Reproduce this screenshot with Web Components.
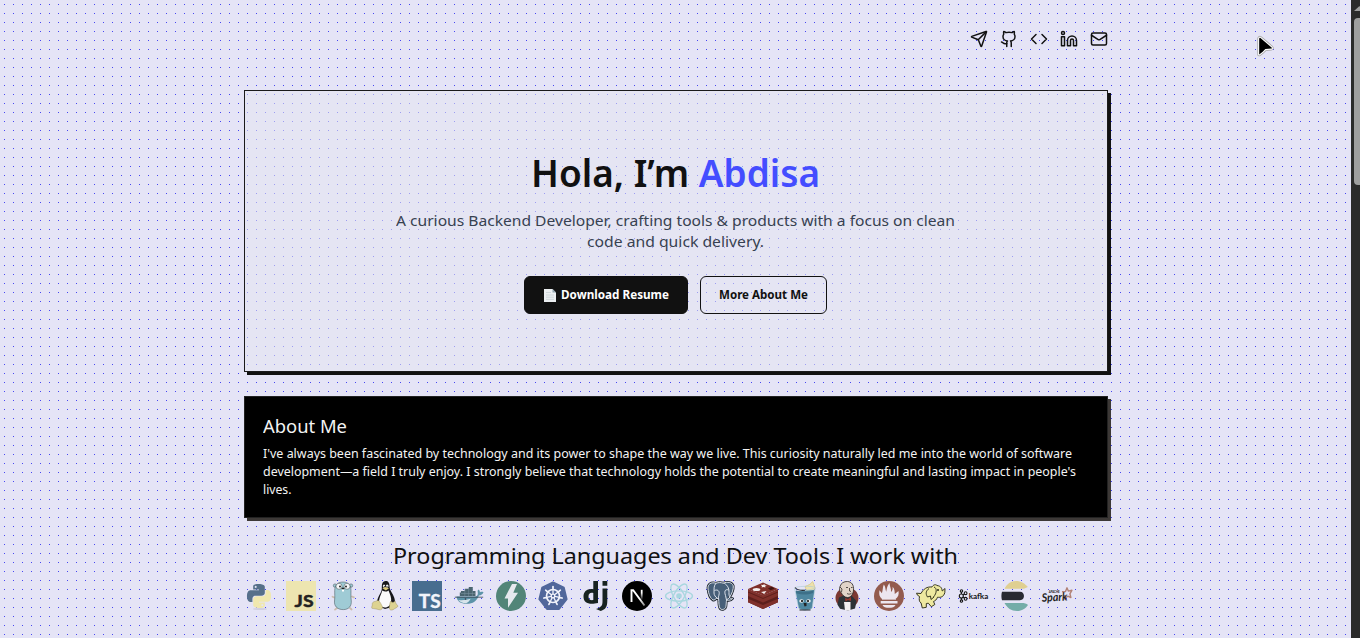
<!DOCTYPE html>
<html lang="en"><head><meta charset="utf-8"><title>Abdisa</title>
<style>
html,body{margin:0;height:100%;overflow:hidden}
body{font-family:"Noto Sans","Open Sans",sans-serif;color:#111}
</style></head><body>
<portfolio-page></portfolio-page>
<script>
const define=(name,html,ready)=>{
  const t=document.createElement('template');t.innerHTML=html;
  customElements.define(name,class extends HTMLElement{
    constructor(){super();this.attachShadow({mode:'open'}).append(t.content.cloneNode(true));}
    connectedCallback(){if(ready)ready(this,this.shadowRoot);}
  });
};

/* One line of copy, set to an exact measure */
define('text-line','<style>:host{display:block;white-space:pre}span{display:inline-block;transform-origin:0 50%}</style><span><slot></slot></span>',(el,r)=>{
  const w=+el.getAttribute('measure'),s=r.querySelector('span');
  el.style.width=w+'px';
  const fit=()=>{s.style.transform='none';const n=s.getBoundingClientRect().width;if(n)s.style.transform=`scaleX(${w/n})`;};
  requestAnimationFrame(fit);
});

const LINKS={
 send:'<path d="M14.536 21.686a.5.5 0 0 0 .937-.024l6.5-19a.496.496 0 0 0-.635-.635l-19 6.5a.5.5 0 0 0-.024.937l7.93 3.18a2 2 0 0 1 1.112 1.11z"/><path d="m21.854 2.147-10.94 10.939"/>',
 github:'<path d="M15 22v-4a4.8 4.8 0 0 0-1-3.5c3 0 6-2 6-5.5.08-1.25-.27-2.48-1-3.5.28-1.15.28-2.35 0-3.5 0 0-1 0-3 1.5-2.64-.5-5.36-.5-8 0C6 2 5 2 5 2c-.3 1.15-.3 2.35 0 3.5A5.403 5.403 0 0 0 4 9c0 3.5 3 5.5 6 5.5-.39.49-.68 1.05-.85 1.65-.17.6-.22 1.23-.15 1.85v4"/><path d="M9 18c-4.51 2-5-2-7-2"/>',
 code:'<path d="m16 18 6-6-6-6M8 6l-6 6 6 6"/>',
 linkedin:'<path d="M16 8a6 6 0 0 1 6 6v7h-4v-7a2 2 0 0 0-4 0v7h-4v-7a6 6 0 0 1 6-6z"/><rect x="2" y="9" width="4" height="12"/><circle cx="4" cy="4" r="2"/>',
 mail:'<rect x="2" y="4" width="20" height="16" rx="2"/><path d="m22 7-8.97 5.7a1.94 1.94 0 0 1-2.06 0L2 7"/>'
};
define('social-link','<style>:host{display:block;width:18px;height:18px}svg{display:block}</style><svg width="18" height="18" viewBox="0 0 24 24" fill="none" stroke="#111" stroke-width="2" stroke-linecap="round" stroke-linejoin="round"></svg>',(el,r)=>{r.querySelector('svg').innerHTML=LINKS[el.getAttribute('icon')];});

const py='M14.25.18l.9.2.73.26.59.3.45.32.34.34.25.34.16.33.1.3.04.26.02.2-.01.13V8.5l-.05.63-.13.55-.21.46-.26.38-.3.31-.33.25-.35.19-.35.14-.33.1-.3.07-.26.04-.21.02H8.77l-.69.05-.59.14-.5.22-.41.27-.33.32-.27.35-.2.36-.15.37-.1.35-.07.32-.04.27-.02.21v3.06H3.17l-.21-.03-.28-.07-.32-.12-.35-.18-.36-.26-.36-.36-.35-.46-.32-.59-.28-.73-.21-.88-.14-1.05-.05-1.23.06-1.22.16-1.04.24-.87.32-.71.36-.57.4-.44.42-.33.42-.24.4-.16.36-.1.32-.05.24-.01h.16l.06.01h8.16v-.83H6.18l-.01-2.75-.02-.37.05-.34.11-.31.17-.28.25-.26.31-.23.38-.2.44-.18.51-.15.58-.12.64-.1.71-.06.77-.04.84-.02 1.27.05zm-6.3 1.98l-.23.33-.08.41.08.41.23.34.33.22.41.09.41-.09.33-.22.23-.34.08-.41-.08-.41-.23-.33-.33-.22-.41-.09-.41.09z';
const spokes=[...Array(7)].map((_,i)=>`<path d="M15 13V6.4" transform="rotate(${i*360/7} 15 15)"/>`).join('');
const TOOLS={
 python:`<ellipse cx="16" cy="28" rx="7" ry="1" fill="#bbb9cc" opacity=".5"/><g transform="translate(3 3)"><path fill="#56708a" d="${py}"/><path fill="#f0e8ae" transform="rotate(180 12 12)" d="${py}"/></g>`,
 javascript:'<rect width="30" height="30" fill="#ede5b0"/><text x="8.6" y="26.4" font-size="17.6" font-weight="700" textLength="19" lengthAdjust="spacingAndGlyphs" fill="#222" stroke="#222" stroke-width=".5">JS</text>',
 go:'<g stroke="#3b4a50" stroke-width=".5"><circle cx="7" cy="4.6" r="1.7" fill="#9fcbd5"/><circle cx="23" cy="4.6" r="1.7" fill="#9fcbd5"/><path d="M6.2 16.5l-1.7-.8M24 15.5l1.9.9M9 27l-2 1.6M22 27l1.6 1.5" stroke="#cdbdae" stroke-width="1.8" stroke-linecap="round"/><path d="M15 1c5.5 0 8 3.500 8 8.500 0 4-.2 6 .3 10.500.4 5-2.500 8.600-8 8.600-6 0-9.300-3.500-8.800-8.600.6-5 .1-7 .2-10.500C6.900 4 9.500 1 15 1Z" fill="#9fcbd5"/><circle cx="11" cy="5.300" r="3" fill="#f5f6f8"/><circle cx="19" cy="5.300" r="3" fill="#f5f6f8"/></g><circle cx="12" cy="5.500" r=".9" fill="#111"/><circle cx="18" cy="5.500" r=".9" fill="#111"/><ellipse cx="15" cy="7.500" rx="1.500" ry=".9" fill="#222"/><path d="M14 8.500h2v2h-2z" fill="#fff"/>',
 linux:'<path fill="#17171a" d="M15.500 0c3 0 4 2.100 4 5 0 3 1 4.500 3.200 8.200 2.500 4.500 3 8 1 12.300L15 28l-9-4c1-5 2.500-9 4.500-12 1.500-2.300 1.300-4 1.300-6.500 0-3.400 1.200-5.500 3.700-5.500Z"/><path fill="#fafafa" d="M12.300 9.500c2 1.500 4.200 1.500 6.200-.1 1.500 3.600 3.200 7 2.600 11.600-.5 3-3 5.500-6.100 5.500-3.500 0-6-3-6-6.200.3-4 2.300-7 3.300-10.800Z"/><ellipse cx="14" cy="5.100" rx="1.200" ry="1.500" fill="#eee"/><ellipse cx="17.200" cy="5.100" rx="1.300" ry="1.500" fill="#eee"/><circle cx="14.300" cy="5.400" r=".5"/><circle cx="17" cy="5.400" r=".5"/><path fill="#dcc978" d="m12.400 7.300 3-1.400 3.600 1.300-3.200 2.200Z"/><path fill="#ddd391" stroke="#8f8350" stroke-width=".4" d="M4.500 20.500c1.500.2 2.300-1.500 3.700-1 2 1 3 4 4.200 6.100.8 2-1 3.700-3.500 3.100-2.200-1-6-.9-7-1.500-.9-1.200.8-2.500.4-4-.2-1.400.8-2.300 2.200-2.700ZM20.800 20c1 2 3 1.500 4.300 0 .7 2.600 1.600 3.700 3 5-.5 1.600-3.300 2.200-5 3.700-2 1-4 .1-3.800-2 .4-2.200.3-4.600 1.500-6.700Z"/>',
 typescript:'<rect width="30" height="30" fill="#486d8f"/><text x="6.800" y="27" font-size="18.400" font-weight="700" textLength="21.800" lengthAdjust="spacingAndGlyphs" fill="#f2f4fa" stroke="#f2f4fa" stroke-width=".4">TS</text>',
 docker:'<path fill="#4a646f" d="M7 10h3.800V7.800h4V6h4v4h2.700v5H5.800v-3.500H7Z"/><path stroke="#7d97a4" stroke-width=".5" d="M7 12.500h14M10.800 8v7M14.600 7v8M18.400 7v8" fill="none"/><path fill="#5c93a8" d="M2.500 15.500h19c1.800-.3 2.500-1.600 2.300-3.500-.2-1.300-.3-2.500.4-3.500 1.200.6 1.700 1.500 1.700 2.700 1.200-.6 2.600-.6 3.600 0-.6 2.100-2.400 3-4.600 3.200-2 5.300-6 8.400-12 8.400-6.500 0-10-2.600-10.400-7.300Z"/><path fill="#d7e4eb" d="M4.300 19c4 .5 9 0 12.300-1.200-1.500 2.600-2.600 3.700-4.500 4.400-3.800-.1-6.300-1.100-7.800-3.200Z"/><path d="M.8 16.200h28.400" stroke="#34424c" stroke-width=".8"/><circle cx="11.500" cy="18" r=".8" fill="#334"/>',
 fastapi:'<circle cx="15" cy="15" r="15" fill="#528578"/><path fill="#e6e9ee" d="M16 3h5l-3.700 8.800H22L12 26.700v-9.300H8.500Z"/>',
 kubernetes:`<path fill="#51679b" stroke="#51679b" stroke-width="2" stroke-linejoin="round" d="m15 1.500 10.800 5.200 2.800 11.500L21 28H9L1.400 18.200 4.200 6.700Z"/><g fill="none" stroke="#f3f4fc" stroke-width="1.300"><circle cx="15" cy="15" r="6.500" stroke-width="1.700"/><circle cx="15" cy="15" r="1.800"/>${spokes}</g><g stroke="#f3f4fc" stroke-width="1.600" stroke-linecap="round">${[...Array(7)].map((_,i)=>`<path d="M15 7V5.600" transform="rotate(${i*360/7} 15 15)"/>`).join('')}</g>`,
 django:'<path transform="translate(3 0)" fill="#182321" d="M10.300 0h4.700v22c-2.400.5-4.300.7-6 .7-5.600 0-8.500-2.400-8.500-7.300 0-4.500 2.900-7.500 7.700-7.500.8 0 1.400.1 2.100.3Zm0 12.100c-2.800-.9-4.800.5-4.800 3.300 0 2.900 1.700 4.200 4.800 3.700ZM19.500 0h4.800v4.700h-4.800ZM19.500 7.500h4.800v12.500c0 6-1.700 8.300-6.500 10L13 28c4.800-1.800 6.500-3 6.500-7.600Z"/>',
 next:'<defs><linearGradient id="n" x2="0" y2="1"><stop offset=".3" stop-color="#fff"/><stop offset="1" stop-color="#fff" stop-opacity="0"/></linearGradient><linearGradient id="m" x1="0" y1="0" x2="1" y2="1"><stop offset=".6" stop-color="#fff"/><stop offset="1" stop-color="#888"/></linearGradient></defs><circle cx="15" cy="15" r="15"/><path d="M9.500 21V9.300h1.700L22.500 24.500" fill="none" stroke="url(#m)" stroke-width="1.900"/><path d="M18.800 8.800h1.800V19h-1.800Z" fill="url(#n)"/>',
 react:'<g fill="none" stroke="#a9d7df" stroke-width="1.350"><ellipse cx="15" cy="15" rx="13.500" ry="5.200"/><ellipse cx="15" cy="15" rx="13.500" ry="5.200" transform="rotate(60 15 15)"/><ellipse cx="15" cy="15" rx="13.500" ry="5.200" transform="rotate(120 15 15)"/></g><circle cx="15" cy="15" r="2.800" fill="#a9d7df"/>',
 postgres:'<path fill="#475f78" stroke="#171f28" stroke-width="2.600" stroke-linejoin="round" d="M10 2.200C5 .8 1.400 3 2 8c.5 5 2.400 9.500 5 11 1.600.6 2.500-1.300 3.600-1.600l2 .4c.4 3.500-.1 8 1.700 10 1.800 1.500 5.100.5 5.600-2 .4-2.200.3-5.500.7-6.700 2.500.5 4.900 0 6-1.500-1.500.1-2.500-.2-3-1.200 2.500-4 4-8.200 3.700-11.500-1.300-4-6-4.200-10-2.800-2.400-.7-4.800-.7-7.300.1Z"/><path fill="#475f78" stroke="#edf0f8" stroke-width=".9" d="M10 2.200C5 .8 1.400 3 2 8c.5 5 2.400 9.500 5 11 1.600.6 2.500-1.300 3.600-1.600l2 .4c.4 3.500-.1 8 1.700 10 1.800 1.500 5.100.5 5.600-2 .4-2.200.3-5.500.7-6.700 2.500.5 4.900 0 6-1.500-1.500.1-2.500-.2-3-1.200 2.500-4 4-8.200 3.700-11.500-1.300-4-6-4.200-10-2.800-2.400-.7-4.800-.7-7.300.1ZM10 2.200C7.500 5 8.200 8 8 12c0 2 1.500 4 3 5M8.500 9.500c3-1.300 5 .3 4.700 3.200-.3 2.300-1.500 4.200-.7 5.300M17.300 2c3.500 1 6 5 5.700 9.500-.2 2.200.5 3.500.5 5l-3 2.500M22.800 9c-3-1-5 .3-3.300 5.500l1 4.500"/>',
 redis:'<path fill="#5d1f1c" d="m0 8.500 15 6 15-6v12.700L15 28 0 21.200Z"/><path fill="#7f302b" d="m0 8 15-6.500L30 8 15 14.500ZM0 11.200l15 6.300 15-6.300v3.700l-15 6.500-15-6.500ZM0 17.700l15 6.300 15-6.300v3.600L15 28 0 21.300Z"/><path fill="#7f302b" d="M0 8l15 6.500L30 8v2.800l-15 6.500L0 10.800Z"/><path fill="none" stroke="#5d1f1c" stroke-width=".8" d="m0 11 15 6.500L30 11"/><ellipse cx="8.500" cy="8.500" rx="3.800" ry="1.600" fill="#f3eeee"/><path fill="#f3eeee" d="m13 3.700 2 .3 1.300-.9.500 1.200 2 .2-1.700 1 .4 1-2-.5-2 .6.500-1.200ZM13 11l5.500-1-2.300 3Z"/><path fill="#401310" d="m20 7.300 4-1.600 2.500 2-4 1.500Z"/>',
 gin:'<path fill="#ede1ad" stroke="#ddcf91" d="M15 5.500c1 3 2.300 6 5.500 7l4.500-5C24.300 4 23.500 2.500 22.500 .5c-1.300 2.300-3.400 3.600-7.500 5Z"/><path fill="#4f87a0" d="M5.500 10 24.500 9l-2.300 17.500c-.3 3.500-13 3.500-13.600.2Z"/><path fill="#3e7088" d="M6 9.500c7 1.700 12 1.600 17.500 0L23 12c-6 2-11 2-16.700.3Z"/><path d="M4.600 7.200c.3-2 18-2.700 20.600-.7l-3 20c-.5 3.200-13 3.200-13.700 0ZM4.700 7.500c4 2.200 16 2 20-.2" fill="none" stroke="#a9c9d5" stroke-width=".6"/><path d="M5 6.500c2 2.500 7 3 10 2.700M9.500 29h11" fill="none" stroke="#26292e" stroke-width="1.100"/><ellipse cx="11.500" cy="20" rx="2.300" ry="1.700" fill="#eee"/><ellipse cx="18.500" cy="20" rx="2.300" ry="1.700" fill="#eee"/><circle cx="12" cy="20" r="1"/><circle cx="18" cy="20" r="1"/><path fill="#222" d="M13.500 22h3v3l-2 .5Z"/>',
 jenkins:'<ellipse cx="15" cy="17" rx="11.500" ry="10.500" fill="#7c3832"/><path fill="#2c3236" d="M7 16.500 13 14l7 1 4.500 5-1.500 7.500-7 2-8-1.700-2.500-4Z"/><path fill="#e1d4c8" stroke="#292522" stroke-width=".8" d="M8 5.500C9 2 12 .3 15.500.5 19.500.7 22 4 21.500 9c-.2 4-2.500 7.500-6 7.500-3 0-5-2.400-6.500-5-1.300-1.200-2-3-1-6Z"/><path fill="none" stroke="#322c29" stroke-width=".8" d="M14 6.500h2M19 6.500h1.500M17.500 7v3l1.500.5M15 12.500c1.500 1 3 .8 4.500-.3M8 6l2 2-.5 3"/><path fill="#f2f0f1" d="M12 21h6.500v8.500h-5.500Z"/><path fill="#98362e" d="m13 17 3 1 3-2v4l-3-1-2.500 1.500Z"/>',
 prometheus:'<circle cx="15" cy="15" r="15" fill="#935b4e"/><path fill="#ece6ef" d="M8 18c-2.500-2.300-3.200-4.300-2.500-8.700l2.400 2.900C9 9 8.500 7 9.800 3.600c2 2.400 1.300 4.600 2.400 7.200.7-3.200 1-6.300 3.300-8.700 0 3.300 2 5.800 1.500 8.800 1.600-1.300 1.800-3 1.600-5.200 2.300 2.500 2 5 2.200 7.300l3.700-3c.7 3.800-.5 6.200-3 8ZM6.700 20h16.800v2.500H6.700ZM8.500 24h13c-1 3.800-12 3.800-13 0Z"/><path d="M8 18.300h14" stroke="#ece6ef" stroke-width=".8"/>',
 hadoop:'<g fill="#eee9a0" stroke="#383820" stroke-width="1" stroke-linejoin="round"><path d="M5 12.500c2.500-4.700 6-7 11-6.500 1.300-2.200 3.200-3 5-1.500 4 .5 5 3 5.200 5.500l2.800-2.500-.2 4.200c-1.300 4.300-4 5-7.300 4.500-1 2.600-2 3.400-4 4.300l1.300 3-3.500 2.200-3-3.500-2 .3v3.800l-4 .7-1.200-5c-2.300-1.500-2-4-1.600-6.500l-2-1.300-1-2Z"/><path fill="none" d="M13 7.500c-3 2.300-3.700 5-1.500 8.500l3-1 .5 3.500 3-2.500M18 6c3 1 3 6-.5 10"/></g><circle cx="22" cy="9" r="1" fill="#272719"/>',
 kafka:'<g fill="none" stroke="#151515" stroke-width="1.100"><circle cx="3.300" cy="15" r="2"/><circle cx="3.500" cy="9.900" r="1.200"/><circle cx="3.500" cy="20.100" r="1.200"/><circle cx="7.600" cy="12.200" r="1.400"/><circle cx="7.600" cy="17.800" r="1.400"/><path d="M3.400 11v2M3.400 17v2M5 14l1.400-1M5 16l1.400 1"/></g><text x="10.700" y="17.700" font-size="8" font-weight="700" textLength="19.500" lengthAdjust="spacingAndGlyphs" fill="#151515">kafka</text>',
 elastic:'<path fill="#dfcf91" d="M4.500 7.800C7 3 10.500 0 16 0c5 0 9 2.500 11.800 6.100-2.400 1.400-4 1.700-6.500 1.700Z"/><path fill="#282a31" d="M2 10.800h18c5.300 0 5.300 8.400 0 8.400H2c-.8-2.700-.8-5.700 0-8.400Z"/><path fill="#74ada8" d="M4.500 22h17c3 0 5 .6 6.500 2-2.500 3.500-6 6-11 6-5.700 0-9.800-3-12.500-8Z"/>',
 spark:'<path fill="none" stroke="#b28377" stroke-width="1.400" stroke-linejoin="round" d="m20 10.700 3.500-.2L25 6.800l1.300 3.300 3.600-.8-2 3.500 1 3.700-3.200-1.300-3.200 2.600.2-3.700"/><text x="6.700" y="12" font-size="3.500" font-weight="700" textLength="11" lengthAdjust="spacingAndGlyphs" fill="#222">APACHE</text><text x="0" y="20.800" transform="rotate(-3 0 20)" font-size="11.500" font-weight="700" font-style="italic" textLength="25.500" lengthAdjust="spacingAndGlyphs" fill="#222">Spark</text>'
};
define('tool-logo','<style>:host{display:block;width:30px;height:30px}svg{display:block;overflow:visible;font-family:Lato,sans-serif}</style><svg width="30" height="30" viewBox="0 0 30 30"></svg>',(el,r)=>{r.querySelector('svg').innerHTML=TOOLS[el.getAttribute('name')];});

define('action-button',`<style>:host{display:flex;align-items:center;box-sizing:border-box;height:38px;padding:0 18px;gap:5px;border:1px solid #111;border-radius:6px;font-size:12px;font-weight:700;line-height:18px}:host([primary]){background:#111;color:#fff;padding:0 18px 0 19px}</style><slot name="icon"></slot><slot></slot>`);
define('page-icon','<style>:host{display:block;width:12px;height:14px}svg{display:block}</style><svg width="12" height="14" viewBox="0 0 12 14"><path fill="#eceff1" d="M0 1h8.500L12 4.500V14H0Z"/><path fill="#90a4ae" d="M8.500 1 12 4.500H8.500Z"/><path stroke="#c8d0d4" d="M2 4.500h5M2 7h8M2 9.200h8M2 11.400h8" stroke-width=".8"/></svg>');

define('hero-card',`<style>
:host{display:flex;flex-direction:column;align-items:center;box-sizing:border-box;height:282px;padding:56px 1px 0 0;border:1px solid #1a1a1a;background:rgba(230,230,240,.55);box-shadow:3px 3px 0 #111}
.title{font-size:37.5px;font-weight:600;line-height:52px;margin-right:1px}
.title b{font-weight:600;color:#444dff}
.sub{display:flex;flex-direction:column;align-items:center;margin:11px 1px 0 0;font-size:15px;line-height:21px;color:#374151}
.row{display:flex;gap:12px;margin-top:24px}
</style>
<text-line class="title" measure="289">Hola, I’m <b>Abdisa</b></text-line>
<div class="sub"><text-line measure="559">A curious Backend Developer, crafting tools &amp; products with a focus on clean</text-line><text-line measure="177">code and quick delivery.</text-line></div>
<div class="row"><action-button primary><page-icon slot="icon"></page-icon><text-line measure="108">Download Resume</text-line></action-button><action-button><text-line measure="89">More About Me</text-line></action-button></div>`);

define('about-card',`<style>
:host{display:block;box-sizing:border-box;height:122px;margin-top:24px;padding:16px 18px 16px 17.5px;border:1px solid #222;background:#000;box-shadow:3px 3px 0 #3c3836;color:#f3f3f3}
.h{font-size:18px;line-height:26px;margin-bottom:6px}
.p{font-size:12px;line-height:18px}
</style><text-line class="h" measure="84">About Me</text-line>
<text-line class="p" measure="809">I've always been fascinated by technology and its power to shape the way we live. This curiosity naturally led me into the world of software</text-line><text-line class="p" measure="813">development—a field I truly enjoy. I strongly believe that technology holds the potential to create meaningful and lasting impact in people's</text-line><text-line class="p" measure="28.500">lives.</text-line>`);

define('tool-strip',`<style>:host{display:flex;flex-direction:column;align-items:center;margin-top:21px}
.h{font-size:22.500px;line-height:34px;margin-right:2px}
.row{display:flex;gap:12px;margin-top:8px;align-self:flex-start}</style>
<text-line class="h" measure="565">Programming Languages and Dev Tools I work with</text-line>
<div class="row">${Object.keys(TOOLS).map(k=>`<tool-logo name="${k}"></tool-logo>`).join('')}</div>`);

define('scroll-rail',`<style>:host{display:block;width:9px;height:638px;background:#2b2b2b;overflow:hidden}
svg{display:block;margin:6px 0 7px 3px}.thumb{width:10px;height:167px;margin-left:3px;border-radius:4px;background:#9f9f9f}</style>
<svg width="10" height="5"><path d="M5.500 0 11 5H0Z" fill="#9f9f9f"/></svg><div class="thumb"></div>`);

define('mouse-pointer',`<style>:host{display:block;position:absolute;left:1256px;top:35px}svg{display:block}</style><svg width="20" height="23"><g transform="scale(1.06)" stroke-linejoin="round"><path d="M3 3.500v14.800l3.300-2.500 2.500-2.500 5.700-.5c.7 0 .6-.6.200-1L4.200 2.800c-.6-.4-1.200 0-1.200.7Z" stroke="#aaa" stroke-width="3.600"/><path d="M3 3.500v14.800l3.300-2.500 2.500-2.500 5.700-.5c.7 0 .6-.6.200-1L4.200 2.800c-.6-.4-1.200 0-1.200.7Z" fill="#000" stroke="#fff" stroke-width="2" paint-order="stroke"/></g></svg>`);

define('portfolio-page',`<style>
:host{display:flex;height:638px;overflow:hidden;position:relative}
.view{flex:1;background:radial-gradient(circle at 4.500px 4.500px,#4646f2 .7px,transparent .71px) 0 0/9px 9px,#e5e4f6}
main{width:864px;margin-left:244px}
nav{display:flex;justify-content:flex-end;gap:12px;height:60px;padding-top:30px}
</style><div class="view"><main>
<nav>${Object.keys(LINKS).map(k=>`<social-link icon="${k}"></social-link>`).join('')}</nav>
<hero-card></hero-card><about-card></about-card><tool-strip></tool-strip></main></div><scroll-rail></scroll-rail><mouse-pointer></mouse-pointer>`);
</script></body></html>
